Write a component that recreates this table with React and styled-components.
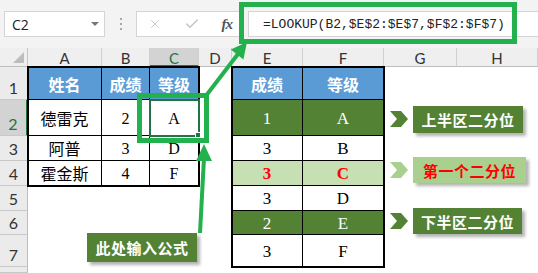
import React from "react"
import styled, { createGlobalStyle } from "styled-components"
import { X, Check } from "lucide-react"

const HI_GREEN = "#22b14c"
const XL_GREEN = "#217346"
const DARK_GREEN = "#548235"
const LIGHT_GREEN = "#c6e0b4"
const TAG_GREEN = "#a9d08e"
const BLUE = "#5b9bd5"

const GlobalStyle = createGlobalStyle`
  html, body {
    margin: 0;
    padding: 0;
    background: #fff;
  }
  * {
    box-sizing: border-box;
  }
`

// Styles
const Page = styled.div`
  position: relative;
  display: flex;
  flex-direction: column;
  width: 538px;
  height: 273px;
  overflow: hidden;
  background: #fff;
  font-family: "Noto Sans CJK SC", "Noto Sans", sans-serif;
`
const Toolbar = styled.div`
  display: flex;
  align-items: center;
  height: 48px;
  flex: none;
  padding-left: 4px;
  background: #f3f3f3;
`
const NameBox = styled.div`
  display: flex;
  align-items: center;
  justify-content: space-between;
  width: 101px;
  height: 26px;
  padding: 0 5px 0 7px;
  background: #fff;
  border: 1px solid #d4d4d4;
  font: 14px "Open Sans", sans-serif;
  color: #222;
`
const Caret = styled.span`
  width: 0;
  height: 0;
  border-left: 4px solid transparent;
  border-right: 4px solid transparent;
  border-top: 4px solid #777;
`
const Grip = styled.div`
  display: flex;
  flex-direction: column;
  align-items: center;
  gap: 3px;
  width: 31px;
  span {
    width: 2px;
    height: 2px;
    background: #a8a8a8;
  }
`
const FxBox = styled.div`
  display: flex;
  align-items: center;
  justify-content: space-around;
  width: 108px;
  height: 26px;
  background: #fff;
  border: 1px solid #d4d4d4;
  color: #c4c4c4;
`
const FxGlyph = styled.span`
  font: italic bold 15px "Liberation Serif", serif;
  color: #555;
  letter-spacing: -1px;
`
const FormulaInput = styled.div`
  flex: 1;
  display: flex;
  align-items: center;
  height: 26px;
  margin-left: 4px;
  padding-left: 14px;
  background: #fff;
  border: 1px solid #d4d4d4;
  border-right: none;
  font: 13px "Liberation Mono", monospace;
  color: #222;
  white-space: nowrap;
`
const Sheet = styled.div`
  flex: 1;
  display: grid;
  grid-template-columns: 28px 74px 48px 49px 33px 71px 81px 73px 1fr;
  grid-template-rows: 19px 33px 36px 25px 25px 25px 24px 32px 1fr;
`
const Corner = styled.div`
  display: flex;
  align-items: flex-end;
  justify-content: flex-end;
  padding: 0 3px 3px 0;
  background: #efefef;
  border-right: 1px solid #c6c6c6;
  border-bottom: 1px solid #bdbdbd;
  &::after {
    content: "";
    border-left: 11px solid transparent;
    border-bottom: 11px solid #bdbdbd;
  }
`
const ColHead = styled.div`
  display: flex;
  align-items: center;
  justify-content: center;
  padding-top: 2px;
  background: ${(p) => (p.$active ? "#d3d3d3" : "#efefef")};
  border-right: 1px solid #d0d0d0;
  border-bottom: ${(p) => (p.$active ? `2px solid ${XL_GREEN}` : "1px solid #bdbdbd")};
  font: 15px Lato, "Liberation Sans", sans-serif;
  color: ${(p) => (p.$active ? XL_GREEN : "#333")};
`
const RowHead = styled.div`
  grid-column: 1;
  grid-row: ${(p) => p.$row};
  display: flex;
  align-items: flex-end;
  justify-content: center;
  padding-bottom: 2px;
  background: ${(p) => (p.$active ? "#d3d3d3" : "#ebebeb")};
  border-bottom: 1px solid #c8c8c8;
  border-right: ${(p) => (p.$active ? `2px solid ${XL_GREEN}` : "1px solid #bdbdbd")};
  font: 16px Lato, "Liberation Sans", sans-serif;
  color: ${(p) => (p.$active ? XL_GREEN : "#333")};
`
const Table = styled.div`
  grid-column: ${(p) => p.$cols};
  grid-row: ${(p) => p.$rows};
  display: grid;
  grid-template-columns: ${(p) => p.$widths};
  grid-template-rows: ${(p) => p.$heights};
  outline: 2px solid #000;
  outline-offset: -1px;
`
const tones = {
  head: { bg: BLUE, fg: "#fff" },
  plain: { bg: "#fff", fg: "#000" },
  dark: { bg: DARK_GREEN, fg: "#fff" },
  light: { bg: LIGHT_GREEN, fg: "#ff0000" },
}
const Cell = styled.div`
  display: flex;
  align-items: center;
  justify-content: center;
  border-right: 1px solid #000;
  border-bottom: 1px solid #000;
  background: ${(p) => tones[p.$tone].bg};
  color: ${(p) => tones[p.$tone].fg};
  font-size: 16px;
`
const HeadCell = styled(Cell)`
  font-weight: 700;
  padding-top: 1px;
`
const ValueCell = styled(Cell)`
  font-family: "Liberation Serif", serif;
  font-size: 16px;
  padding-top: 2px;
`
const SerifCell = styled(Cell)`
  font-family: "Liberation Serif", serif;
  font-size: 17px;
  font-weight: ${(p) => (p.$tone === "light" ? 700 : 400)};
  padding-top: 2px;
`

// overlays
const Frame = styled.div`
  position: absolute;
  left: ${(p) => p.$x}px;
  top: ${(p) => p.$y}px;
  width: ${(p) => p.$w}px;
  height: ${(p) => p.$h}px;
  border: ${(p) => p.$stroke}px solid ${(p) => p.$color};
  pointer-events: none;
`
const FillHandle = styled.div`
  position: absolute;
  left: 195px;
  top: 132px;
  width: 6px;
  height: 6px;
  background: ${XL_GREEN};
  border: 1px solid #fff;
`
const Arrows = styled.svg`
  position: absolute;
  left: 0;
  top: 0;
  pointer-events: none;
`
const Tag = styled.div`
  position: absolute;
  left: ${(p) => p.$x}px;
  top: ${(p) => p.$y}px;
  width: ${(p) => p.$w}px;
  height: ${(p) => p.$h}px;
  display: flex;
  align-items: center;
  justify-content: center;
  background: ${(p) => (p.$soft ? TAG_GREEN : DARK_GREEN)};
  color: ${(p) => (p.$soft ? "#ff0000" : "#fff")};
  box-shadow: 3px 3px 3px rgba(0, 0, 0, 0.3);
  font-size: 15px;
  font-weight: 700;
  letter-spacing: 0.5px;
`
const Chevron = styled.svg`
  position: absolute;
  left: 390px;
  top: ${(p) => p.$y}px;
`

const leftRows = [
  ["德雷克", "2", "A"],
  ["阿普", "3", "D"],
  ["霍金斯", "4", "F"],
]
const rightRows = [
  ["1", "A", "dark"],
  ["3", "B", "plain"],
  ["3", "C", "light"],
  ["3", "D", "plain"],
  ["2", "E", "dark"],
  ["3", "F", "plain"],
]
const tags = [
  { y: 106, w: 110, h: 27, text: "上半区二分位" },
  { y: 157, w: 113, h: 26, text: "第一个二分位", soft: true },
  { y: 208, w: 109, h: 26, text: "下半区二分位" },
]

const App = () => {
  return (
    <Page>
      <GlobalStyle />
      <Toolbar>
        <NameBox>
          C2
          <Caret />
        </NameBox>
        <Grip>
          <span />
          <span />
          <span />
        </Grip>
        <FxBox>
          <X size={14} strokeWidth={1.5} />
          <Check size={16} strokeWidth={2.2} />
          <FxGlyph>fx</FxGlyph>
        </FxBox>
        <FormulaInput>=LOOKUP(B2,$E$2:$E$7,$F$2:$F$7)</FormulaInput>
      </Toolbar>

      <Sheet>
        <Corner />
        {["A", "B", "C", "D", "E", "F", "G", "H"].map((c) => (
          <ColHead key={c} $active={c === "C"}>
            {c}
          </ColHead>
        ))}
        {[1, 2, 3, 4, 5, 6, 7, 8].map((n) => (
          <RowHead key={n} $row={n + 1} $active={n === 2}>
            {/* row 8 is cut off by the window, its number is not visible */}
            {n < 8 ? n : null}
          </RowHead>
        ))}

        <Table $cols="2 / 5" $rows="2 / 6" $widths="74px 48px 49px" $heights="33px 36px 25px 25px">
          <HeadCell $tone="head">姓名</HeadCell>
          <HeadCell $tone="head">成绩</HeadCell>
          <HeadCell $tone="head">等级</HeadCell>
          {leftRows.map(([name, score, grade]) => (
            <React.Fragment key={name}>
              <Cell $tone="plain">{name}</Cell>
              <ValueCell $tone="plain">{score}</ValueCell>
              <ValueCell $tone="plain">{grade}</ValueCell>
            </React.Fragment>
          ))}
        </Table>

        <Table
          $cols="6 / 8"
          $rows="2 / 9"
          $widths="71px 81px"
          $heights="33px 36px 25px 25px 25px 24px 32px"
        >
          <HeadCell $tone="head">成绩</HeadCell>
          <HeadCell $tone="head">等级</HeadCell>
          {rightRows.map(([score, grade, tone]) => (
            <React.Fragment key={grade}>
              <SerifCell $tone={tone}>{score}</SerifCell>
              <SerifCell $tone={tone}>{grade}</SerifCell>
            </React.Fragment>
          ))}
        </Table>
      </Sheet>

      {/* highlights drawn over the sheet */}
      <Frame $x={149} $y={99} $w={51} $h={38} $stroke={2} $color={XL_GREEN} />
      <FillHandle />
      <Frame $x={137} $y={93} $w={72} $h={50} $stroke={5} $color={HI_GREEN} />
      <Frame $x={239} $y={2} $w={278} $h={42} $stroke={5} $color={HI_GREEN} />

      <Arrows width="538" height="273" viewBox="0 0 538 273">
        <line x1="205" y1="97" x2="238" y2="54" stroke={HI_GREEN} strokeWidth="4" />
        <polygon points="247,42 243.4,59.6 230.8,49.6" fill={HI_GREEN} />
        <line x1="200" y1="233" x2="204" y2="158" stroke={HI_GREEN} strokeWidth="4" />
        <polygon points="204,144 212,161 196,161" fill={HI_GREEN} />
      </Arrows>

      {tags.map((t) => (
        <React.Fragment key={t.text}>
          <Chevron $y={t.y + 5} width="18" height="16" viewBox="0 0 18 16">
            <polygon points="0,0 11,0 18,8 11,16 0,16 7,8" fill={t.soft ? TAG_GREEN : DARK_GREEN} />
          </Chevron>
          <Tag $x={413} $y={t.y} $w={t.w} $h={t.h} $soft={t.soft}>
            {t.text}
          </Tag>
        </React.Fragment>
      ))}
      <Tag $x={87} $y={233} $w={110} $h={29}>
        此处输入公式
      </Tag>
    </Page>
  )
}

export default App
